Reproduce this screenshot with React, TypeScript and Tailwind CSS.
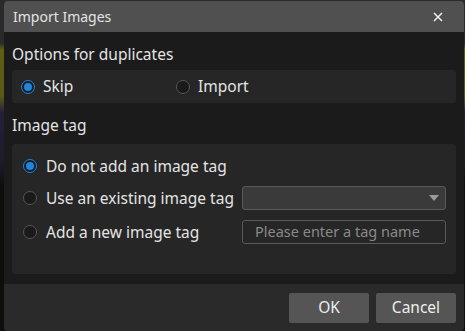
import React from "react";

function Radio({ checked }: { checked?: boolean }) {
  return checked ? (
    <span className="flex h-[14px] w-[14px] shrink-0 items-center justify-center rounded-full border-[1.5px] border-[#1e86e0] bg-[#1c1c1c]">
      <span className="h-[8px] w-[8px] rounded-full bg-[#1e86e0]" />
    </span>
  ) : (
    <span className="h-[14px] w-[14px] shrink-0 rounded-full border border-[#555555] bg-[#1a1a1a]" />
  );
}

export default function App() {
  return (
    <div
      className="flex h-[331px] w-[465px] bg-[linear-gradient(to_bottom,#2a2a2a_0%,#2a2a2a_13%,#5e5e14_15%,#5a5a18_29%,#24203a_34%,#1c1a2a_50%,#0e0e0c_56%,#0e0e0c_100%)] pl-[4px] pr-[1px] pt-[1px]"
      style={{ fontFamily: '"Noto Sans", "Open Sans", sans-serif' }}
    >
      <div className="flex flex-1 flex-col overflow-hidden rounded-[4px] bg-[#1b1b1b]">
        <div className="flex h-[32px] items-center justify-between bg-[#505050] pl-[9px] pr-[21px]">
          <span className="text-[14px] text-[#e4e4e4]">Import Images</span>
          <svg width="10" height="10" viewBox="0 0 10 10">
            <path d="M1 1L9 9M9 1L1 9" stroke="#f0f0f0" strokeWidth="1.5" />
          </svg>
        </div>
        <div className="flex flex-1 flex-col px-[8px]">
          <div className="pt-[11px] text-[15.5px] leading-[22px] text-[#e4e4e4]">Options for duplicates</div>
          <div className="mt-[5px] flex h-[33px] items-center rounded-[3px] bg-[#262626] px-[9px] text-[15.5px] text-[#e4e4e4]">
            <div className="flex w-[155px] shrink-0 items-center gap-[8px]">
              <Radio checked />
              <span>Skip</span>
            </div>
            <div className="flex items-center gap-[8px]">
              <Radio />
              <span>Import</span>
            </div>
          </div>
          <div className="mt-[11px] text-[15.5px] leading-[22px] text-[#e4e4e4]">Image tag</div>
          <div className="mt-[8px] flex h-[130px] flex-col rounded-[3px] bg-[#262626] pl-[11px] pr-[10px] pt-[10px] text-[15.5px] text-[#e4e4e4]">
            <div className="flex h-[24px] items-center gap-[9px]">
              <Radio checked />
              <span>Do not add an image tag</span>
            </div>
            <div className="mt-[8px] flex h-[24px] items-center">
              <div className="flex w-[219px] shrink-0 items-center gap-[9px]">
                <Radio />
                <span>Use an existing image tag</span>
              </div>
              <div className="flex h-[24px] w-[204px] shrink-0 items-center justify-end rounded-[3px] border border-[#5a5a5a] bg-[#3a3a3a] pr-[6px]">
                <svg width="10" height="6" viewBox="0 0 10 6">
                  <path d="M0 0H10L5 6Z" fill="#9a9a9a" />
                </svg>
              </div>
            </div>
            <div className="mt-[10px] flex h-[24px] items-center">
              <div className="flex w-[219px] shrink-0 items-center gap-[9px]">
                <Radio />
                <span>Add a new image tag</span>
              </div>
              <div className="flex h-[24px] w-[204px] shrink-0 items-center rounded-[3px] border border-[#5a5a5a] bg-[#262626] px-[12px] text-[14.5px] text-[#8a8a8a]">
                Please enter a tag name
              </div>
            </div>
          </div>
          <div className="h-[10px]" />
        </div>
        <div className="flex h-[48px] items-center justify-end gap-[7px] bg-[#2a2a2a] pr-[8px]">
          <button className="h-[30px] w-[80px] rounded-[2px] bg-[#555555] text-[15.5px] text-[#eeeeee]">OK</button>
          <button className="h-[30px] w-[80px] rounded-[2px] bg-[#555555] text-[15.5px] text-[#eeeeee]">Cancel</button>
        </div>
      </div>
    </div>
  );
}
